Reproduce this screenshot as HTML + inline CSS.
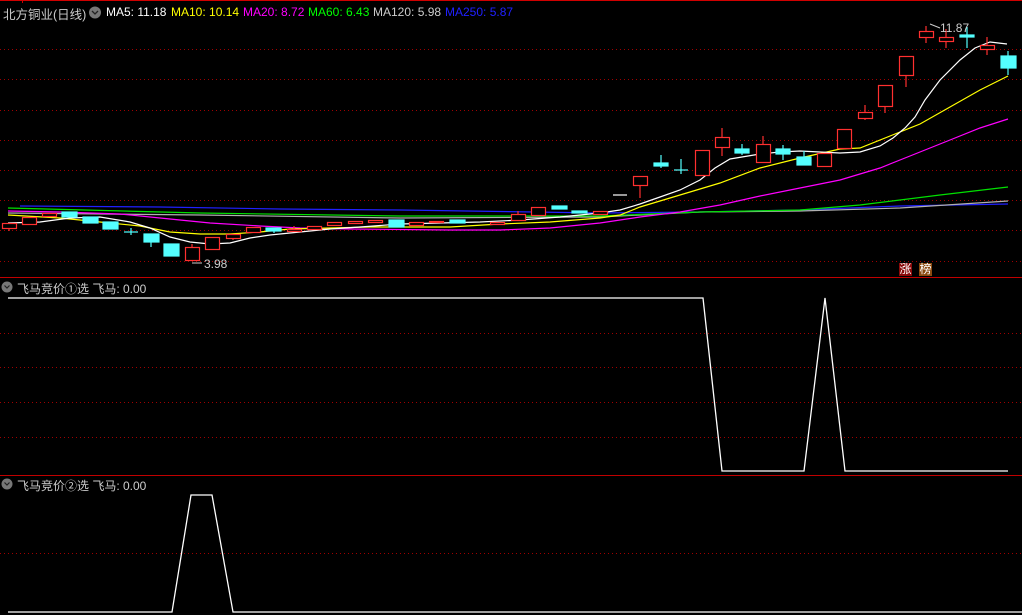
<!DOCTYPE html>
<html><head><meta charset="utf-8"><style>
html,body{margin:0;padding:0;background:#000;}
body{width:1022px;height:615px;overflow:hidden;position:relative;font-family:"Liberation Sans","Noto Sans CJK SC",sans-serif;}
.t{position:absolute;white-space:nowrap;}
.h{top:5px;font-size:12px;}
</style></head><body>
<svg width="1022" height="615" style="position:absolute;left:0;top:0" xmlns="http://www.w3.org/2000/svg">
<line x1="0" y1="0.5" x2="1022" y2="0.5" stroke="#d00000"/>
<line x1="22.5" y1="0" x2="22.5" y2="3" stroke="#d00000"/>
<g stroke="#a00000" stroke-dasharray="1,3" stroke-width="1">
<line x1="0" y1="49.5" x2="1022" y2="49.5"/><line x1="0" y1="79.5" x2="1022" y2="79.5"/>
<line x1="0" y1="110.5" x2="1022" y2="110.5"/><line x1="0" y1="140.5" x2="1022" y2="140.5"/>
<line x1="0" y1="170.5" x2="1022" y2="170.5"/><line x1="0" y1="200.5" x2="1022" y2="200.5"/>
<line x1="0" y1="230.5" x2="1022" y2="230.5"/><line x1="0" y1="261.5" x2="1022" y2="261.5"/>
<line x1="0" y1="333.5" x2="1022" y2="333.5"/><line x1="0" y1="367.5" x2="1022" y2="367.5"/>
<line x1="0" y1="402.5" x2="1022" y2="402.5"/><line x1="0" y1="437.5" x2="1022" y2="437.5"/>
<line x1="0" y1="553.5" x2="1022" y2="553.5"/>
</g>
<rect x="0" y="277" width="1022" height="1" fill="#c00000"/>
<rect x="0" y="475" width="1022" height="1" fill="#c00000"/>
<g fill="none" stroke-width="1.2">
<polyline stroke="#2020ff" points="20,206 160,207 280,209 400,210 600,213 700,212 800,210 900,206 1008,204"/>
<polyline stroke="#b0b0b0" points="8,213 200,215 400,218 600,217 700,212 800,211 900,208 1008,201"/>
<polyline stroke="#00e000" points="8,208 200,213 400,216 600,216 700,212 800,210 860,205 940,195 1008,187"/>
<polyline stroke="#ff00ff" points="8,211 60,212 120,214 170,219 210,223 260,226 300,228 350,229 450,230 500,230 550,228 600,223 640,217 680,212 720,205 760,196 800,188 840,180 880,168 910,156 950,140 980,128 1008,119"/>
<polyline stroke="#ffff00" points="8,215 60,218 100,222 140,226 170,232 200,234 230,234 260,232 290,229 330,228 370,227 450,227 500,224 550,222 600,218 620,215 640,207 680,195 720,183 760,168 800,158 840,149 860,148 890,136 920,124 950,107 980,90 1008,76"/>
<polyline stroke="#ffffff" points="8,223 40,222 70,218 100,217 130,222 150,228 170,237 190,242 210,244 230,243 250,238 270,235 300,232 330,229 360,227 400,224 440,223 480,222 520,220 560,217 600,213 620,210 640,204 660,197 680,190 700,180 715,168 730,159 760,154 780,152 800,151 820,152 840,153 860,152 880,146 893,138 905,128 915,117 925,100 940,80 960,60 975,48 990,42 1007,44"/>
</g>
<g fill="#000" stroke="#ff3030" stroke-width="1.2">
<line x1="9" y1="223" x2="9" y2="231"/><rect x="2.5" y="223.5" width="14" height="5"/>
<rect x="22.5" y="217.5" width="14" height="7"/>
<rect x="42.5" y="213.5" width="14" height="3"/>
<line x1="192" y1="244" x2="192" y2="261"/><rect x="185.5" y="247.5" width="14" height="13"/>
<rect x="205.5" y="237.5" width="14" height="12"/>
<line x1="233" y1="234" x2="233" y2="240"/><rect x="226.5" y="234.5" width="14" height="4"/>
<rect x="246.5" y="227.5" width="14" height="5"/>
<line x1="294" y1="226" x2="294" y2="232"/><rect x="287.5" y="229.5" width="14" height="2"/>
<rect x="307.5" y="226.5" width="14" height="3"/>
<rect x="327.5" y="222.5" width="14" height="3"/>
<rect x="348.5" y="221.5" width="14" height="2"/>
<rect x="368.5" y="220.5" width="14" height="2"/>
<rect x="409.5" y="222.5" width="14" height="3"/>
<rect x="429.5" y="221.5" width="14" height="1"/>
<rect x="490.5" y="222.5" width="14" height="2"/>
<line x1="518" y1="211" x2="518" y2="214"/><rect x="511.5" y="214.5" width="14" height="6"/>
<rect x="531.5" y="207.5" width="14" height="8"/>
<rect x="593.5" y="211.5" width="14" height="3"/>
<line x1="640" y1="176" x2="640" y2="198"/><rect x="633.5" y="176.5" width="14" height="9"/>
<rect x="695.5" y="150.5" width="14" height="25"/>
<line x1="722" y1="128" x2="722" y2="156"/><rect x="715.5" y="137.5" width="14" height="10"/>
<line x1="763" y1="136" x2="763" y2="144"/><rect x="756.5" y="144.5" width="14" height="18"/>
<rect x="817.5" y="153.5" width="14" height="13"/>
<rect x="837.5" y="129.5" width="14" height="19"/>
<line x1="865" y1="105" x2="865" y2="120"/><rect x="858.5" y="112.5" width="14" height="6"/>
<line x1="885" y1="107" x2="885" y2="113"/><rect x="878.5" y="85.5" width="14" height="21"/>
<line x1="906" y1="75" x2="906" y2="87"/><rect x="899.5" y="56.5" width="14" height="19"/>
<line x1="926" y1="26" x2="926" y2="43"/><rect x="919.5" y="31.5" width="14" height="6"/>
<line x1="946" y1="29" x2="946" y2="48"/><rect x="939.5" y="37.5" width="14" height="4"/>
<line x1="987" y1="37" x2="987" y2="55"/><rect x="980.5" y="45.5" width="14" height="4"/>
</g>
<line x1="613" y1="195" x2="627" y2="195" stroke="#fff" stroke-width="1.2"/>
<g fill="#54ffff" stroke="#54ffff" stroke-width="1.2">
<rect x="62" y="212" width="15" height="5"/>
<rect x="83" y="217" width="15" height="6"/>
<rect x="103" y="222" width="15" height="7"/>
<line x1="131" y1="228" x2="131" y2="235"/><line x1="124" y1="232" x2="138" y2="232"/>
<line x1="151" y1="234" x2="151" y2="247"/><rect x="144" y="234" width="15" height="8"/>
<rect x="164" y="244" width="15" height="12"/>
<line x1="274" y1="228" x2="274" y2="233"/><rect x="266" y="228" width="15" height="3"/>
<rect x="389" y="220" width="15" height="7"/>
<rect x="450" y="220" width="15" height="3"/>
<rect x="552" y="206" width="15" height="3"/>
<rect x="572" y="211" width="15" height="2"/>
<line x1="661" y1="155" x2="661" y2="168"/><rect x="654" y="163" width="14" height="3"/>
<line x1="681" y1="159" x2="681" y2="174"/><line x1="674" y1="170" x2="688" y2="170"/>
<line x1="742" y1="144" x2="742" y2="155"/><rect x="735" y="149" width="14" height="4"/>
<line x1="783" y1="145" x2="783" y2="160"/><rect x="776" y="149" width="14" height="5"/>
<line x1="804" y1="151" x2="804" y2="157"/><rect x="797" y="157" width="14" height="8"/>
<line x1="967" y1="27" x2="967" y2="48"/><rect x="960" y="35" width="14" height="2"/>
<line x1="1008" y1="51" x2="1008" y2="75"/><rect x="1001" y="56" width="15" height="12"/>
</g>
<line x1="930" y1="24" x2="940" y2="28" stroke="#ccc"/>
<line x1="192" y1="263" x2="202" y2="263" stroke="#ccc"/>
<polyline fill="none" stroke="#fff" stroke-width="1.3" points="8,298 703,298 722,471 804,471 825,298 845,471 1008,471"/>
<polyline fill="none" stroke="#fff" stroke-width="1.3" points="8,612 172,612 191,495 212,495 233,612 1022,612"/>
<circle cx="95" cy="12.5" r="6" fill="#777"/><path d="M92,11 l3,3 l3,-3" fill="none" stroke="#222" stroke-width="1.3"/>
<circle cx="7" cy="287" r="5.5" fill="#777"/><path d="M4.5,285.5 l2.5,2.5 l2.5,-2.5" fill="none" stroke="#222" stroke-width="1.2"/>
<circle cx="7" cy="484" r="5.5" fill="#777"/><path d="M4.5,482.5 l2.5,2.5 l2.5,-2.5" fill="none" stroke="#222" stroke-width="1.2"/>
</svg>
<div class="t h" style="left:3px;color:#ccc;font-size:12.5px;top:4px">北方铜业(日线)</div>
<div class="t h" style="left:106px;color:#fff">MA5: 11.18</div>
<div class="t h" style="left:171px;color:#ffff00">MA10: 10.14</div>
<div class="t h" style="left:243px;color:#ff00ff">MA20: 8.72</div>
<div class="t h" style="left:308px;color:#00ff00">MA60: 6.43</div>
<div class="t h" style="left:373px;color:#ccc">MA120: 5.98</div>
<div class="t h" style="left:445px;color:#2020ff">MA250: 5.87</div>
<div class="t" style="left:940px;top:21px;font-size:12px;color:#ccc">11.87</div>
<div class="t" style="left:204px;top:257px;font-size:12px;color:#ccc">3.98</div>
<div class="t" style="left:899px;top:263px;width:13px;height:13px;background:#8b0a0a;color:#fff;font-size:12px;line-height:13px;text-align:center">涨</div>
<div class="t" style="left:919px;top:263px;width:13px;height:13px;background:#8b4a10;color:#fff;font-size:12px;line-height:13px;text-align:center">榜</div>
<div class="t" style="left:17px;top:280px;font-size:12px;color:#ccc">飞马竞价①选 飞马: 0.00</div>
<div class="t" style="left:17px;top:477px;font-size:12px;color:#ccc">飞马竞价②选 飞马: 0.00</div>
</body></html>
